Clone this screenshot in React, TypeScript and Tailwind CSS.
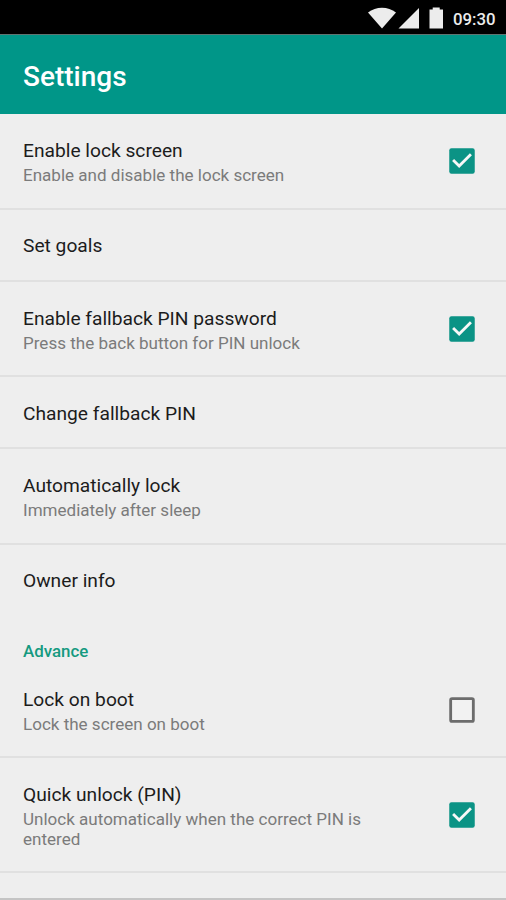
type CheckboxProps = {
  checked: boolean;
};

const Checkbox = ({ checked }: CheckboxProps) => (
  <svg
    role="checkbox"
    aria-checked={checked}
    className="h-[34px] w-[34px] shrink-0"
    viewBox="0 0 24 24"
  >
    {checked ? (
      <>
        <rect x="3" y="3" width="18" height="18" rx="1.6" fill="#0b9385" />
        <path d="M10 17l-5-5 1.41-1.41L10 14.17l7.59-7.59L19 8z" fill="#f7f7f7" />
      </>
    ) : (
      <rect x="4" y="4" width="16" height="16" rx="1" fill="#f2f2f2" stroke="#6c6c6c" strokeWidth="2" />
    )}
  </svg>
);

type RowProps = {
  title: string;
  summary?: string;
  checked?: boolean;
  className: string;
};

const Row = ({ title, summary, checked, className }: RowProps) => (
  <li className={`flex items-center justify-between pl-[23px] pr-[27px] ${className}`}>
    <div className="w-[360px] pt-0.5">
      <p className="text-[19.2px] leading-6 text-[#1c1c1c]">{title}</p>
      {summary && (
        <p className="mt-0.5 text-[17.05px] leading-5 text-[#7b7b7b]">{summary}</p>
      )}
    </div>
    {checked !== undefined && <Checkbox checked={checked} />}
  </li>
);

const StatusBar = () => (
  <div className="flex h-[34px] items-center bg-black pl-[368px] text-[#ececec]">
    <svg className="h-[34px] w-[80px]" viewBox="0 0 80 34" fill="currentColor">
      <path d="M0 12.5C8 6.2 20 6.2 28 12.5L14 28.5z" />
      <path d="M30.5 28.5L51 8v20.5z" />
      <path d="M61.5 9.5h3.2V7.5h7v2h3.3v19H61.5z" />
    </svg>
    <span className="ml-[5px] mt-[4px] text-[16.8px] font-medium leading-5">09:30</span>
  </div>
);

export default function App() {
  return (
    <div className="flex h-[900px] w-[506px] flex-col overflow-hidden bg-[#eeeeee] font-[Roboto,sans-serif]">
      <StatusBar />
      <header className="flex h-20 items-center border-t border-[#5f7471] bg-[#009688] pl-[23px] pt-[5px]">
        <h1 className="text-[28px] font-medium leading-8 text-white">Settings</h1>
      </header>

      <ul>
        <Row title="Enable lock screen" summary="Enable and disable the lock screen" checked className="h-[96px] border-b-2 border-[#e0e0e0]" />
        <Row title="Set goals" className="h-[72px] border-b-2 border-[#e0e0e0]" />
        <Row title="Enable fallback PIN password" summary="Press the back button for PIN unlock" checked className="h-[95px] border-b-2 border-[#e0e0e0]" />
        <Row title="Change fallback PIN" className="h-[72px] border-b-2 border-[#e0e0e0] pt-px" />
        <Row title="Automatically lock" summary="Immediately after sleep" className="h-[96px] border-b-2 border-[#e0e0e0]" />
        <Row title="Owner info" className="h-[69px]" />
      </ul>

      <h2 className="flex h-[48px] items-center pl-[23px] pt-[25px] text-[16.9px] font-medium leading-5 text-[#159a80]">
        Advance
      </h2>
      <ul>
        <Row title="Lock on boot" summary="Lock the screen on boot" checked={false} className="h-[96px] border-b-2 border-[#e0e0e0] pt-0.5" />
        <Row title="Quick unlock (PIN)" summary="Unlock automatically when the correct PIN is entered" checked className="h-[115px] border-b-2 border-[#e0e0e0]" />
      </ul>
      <div className="mt-auto border-b-2 border-[#c4c4c4]" />
    </div>
  );
}
